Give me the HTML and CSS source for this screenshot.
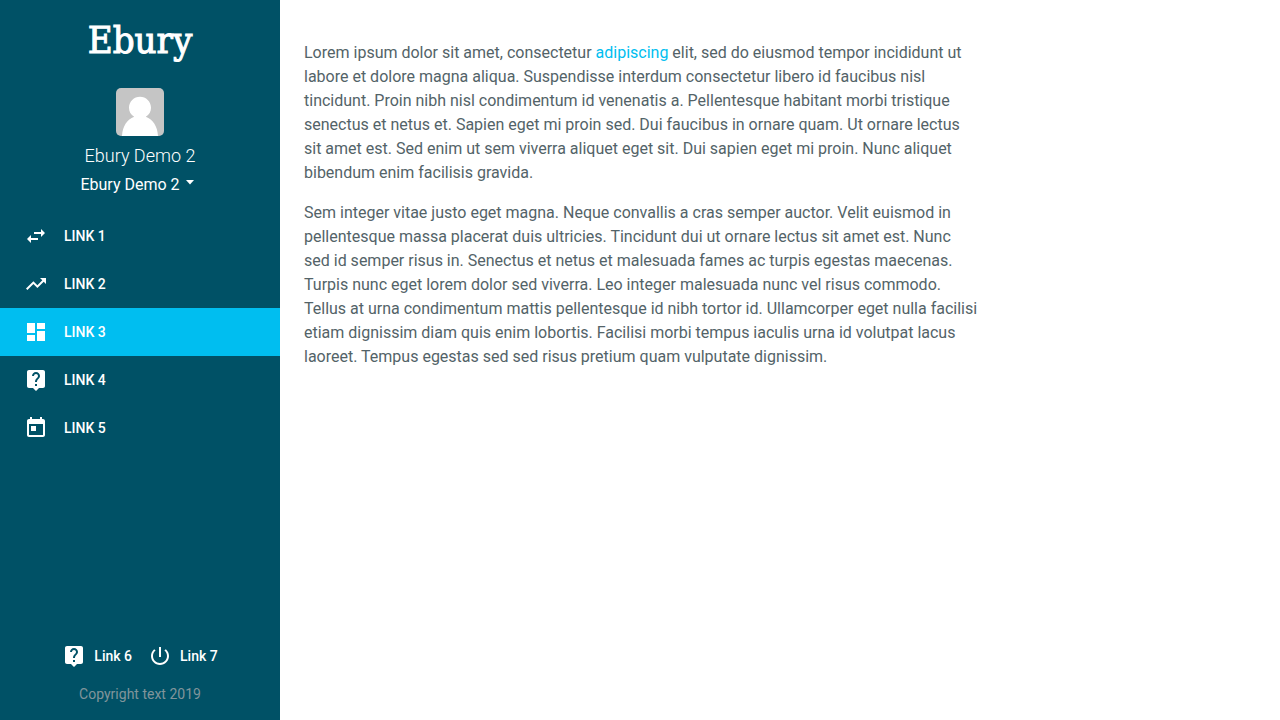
FILE: index.html
```html
<!DOCTYPE html>
<html lang="en">
<head>
<meta charset="utf-8">
<meta name="viewport" content="width=device-width, initial-scale=1">
<title>Ebury</title>
<link rel="stylesheet" href="styles.css">
</head>
<body>
<div class="app">
  <aside class="sidebar">
    <a class="logo" href="#">Ebury</a>
    <div class="profile">
      <svg class="avatar" viewBox="0 0 48 48" role="img" aria-label="User avatar">
        <rect width="48" height="48" fill="#c5c5c5"/>
        <path fill="#fff" d="M6 48C6.500 38.500 11 31.500 18.200 28.800C14.800 26.800 13 23.600 13 19.800C13 13.600 18 8.800 24 8.800S35 13.600 35 19.800C35 23.600 33.200 26.800 29.800 28.800C37 31.500 41.500 38.500 42 48Z"/>
      </svg>
      <div class="name">Ebury Demo 2</div>
      <button class="account" type="button">Ebury Demo 2
        <svg class="caret" viewBox="0 0 8 5" aria-hidden="true"><path d="M0 0h8L4 4.500z"/></svg>
      </button>
    </div>
    <nav class="menu">
      <a class="item" href="#"><svg class="icon" viewBox="0 0 24 24" aria-hidden="true"><path d="M6.990 11L3 15l3.990 4v-3H14v-2H6.990v-3zM21 9l-3.990-4v3H10v2h7.010v3L21 9z"/></svg>Link 1</a>
      <a class="item" href="#"><svg class="icon" viewBox="0 0 24 24" aria-hidden="true"><path d="M16 6l2.290 2.290-4.880 4.880-4-4L2 16.590 3.410 18l6-6 4 4 6.300-6.290L22 12V6z"/></svg>Link 2</a>
      <a class="item active" href="#" aria-current="page"><svg class="icon" viewBox="0 0 24 24" aria-hidden="true"><path d="M3 13h8V3H3v10zm0 8h8v-6H3v6zm10 0h8V11h-8v10zm0-18v6h8V3h-8z"/></svg>Link 3</a>
      <a class="item" href="#"><svg class="icon" viewBox="0 0 24 24" aria-hidden="true"><path d="M19 2H5c-1.110 0-2 .9-2 2v14c0 1.100.89 2 2 2h4l3 3 3-3h4c1.100 0 2-.9 2-2V4c0-1.100-.9-2-2-2zm-6 16h-2v-2h2v2zm2.070-7.750l-.9.920C13.450 11.900 13 12.500 13 14h-2v-.5c0-1.100.45-2.100 1.170-2.830l1.240-1.260c.37-.36.59-.86.59-1.410 0-1.100-.9-2-2-2s-2 .9-2 2H8c0-2.210 1.790-4 4-4s4 1.790 4 4c0 .88-.36 1.680-.93 2.250z"/></svg>Link 4</a>
      <a class="item" href="#"><svg class="icon" viewBox="0 0 24 24" aria-hidden="true"><path d="M19 3h-1V1h-2v2H8V1H6v2H5c-1.110 0-1.990.9-1.990 2L3 19c0 1.100.89 2 2 2h14c1.100 0 2-.9 2-2V5c0-1.100-.9-2-2-2zm0 16H5V8h14v11zM7 10h5v5H7z"/></svg>Link 5</a>
    </nav>
    <footer class="footer">
      <div class="actions">
        <a class="action" href="#"><svg class="icon" viewBox="0 0 24 24" aria-hidden="true"><path d="M19 2H5c-1.110 0-2 .9-2 2v14c0 1.100.89 2 2 2h4l3 3 3-3h4c1.100 0 2-.9 2-2V4c0-1.100-.9-2-2-2zm-6 16h-2v-2h2v2zm2.070-7.750l-.9.920C13.450 11.900 13 12.500 13 14h-2v-.5c0-1.100.45-2.100 1.170-2.830l1.240-1.260c.37-.36.59-.86.59-1.410 0-1.100-.9-2-2-2s-2 .9-2 2H8c0-2.210 1.790-4 4-4s4 1.790 4 4c0 .88-.36 1.680-.93 2.250z"/></svg>Link 6</a>
        <a class="action" href="#"><svg class="icon" viewBox="0 0 24 24" aria-hidden="true"><path d="M13 3h-2v10h2V3zm4.830 2.170l-1.420 1.420C17.990 7.860 19 9.810 19 12c0 3.870-3.130 7-7 7s-7-3.130-7-7c0-2.190 1.010-4.140 2.580-5.420L6.170 5.170C4.230 6.820 3 9.260 3 12c0 4.970 4.030 9 9 9s9-4.030 9-9c0-2.740-1.230-5.180-3.170-6.830z"/></svg>Link 7</a>
      </div>
      <div class="copyright">Copyright text 2019</div>
    </footer>
  </aside>
  <main class="content">
    <p>Lorem ipsum dolor sit amet, consectetur <a href="#">adipiscing</a> elit, sed do eiusmod tempor incididunt ut labore et dolore magna aliqua. Suspendisse interdum consectetur libero id faucibus nisl tincidunt. Proin nibh nisl condimentum id venenatis a. Pellentesque habitant morbi tristique senectus et netus et. Sapien eget mi proin sed. Dui faucibus in ornare quam. Ut ornare lectus sit amet est. Sed enim ut sem viverra aliquet eget sit. Dui sapien eget mi proin. Nunc aliquet bibendum enim facilisis gravida.</p>
    <p>Sem integer vitae justo eget magna. Neque convallis a cras semper auctor. Velit euismod in pellentesque massa placerat duis ultricies. Tincidunt dui ut ornare lectus sit amet est. Nunc sed id semper risus in. Senectus et netus et malesuada fames ac turpis egestas maecenas. Turpis nunc eget lorem dolor sed viverra. Leo integer malesuada nunc vel risus commodo. Tellus at urna condimentum mattis pellentesque id nibh tortor id. Ullamcorper eget nulla facilisi etiam dignissim diam quis enim lobortis. Facilisi morbi tempus iaculis urna id volutpat lacus laoreet. Tempus egestas sed sed risus pretium quam vulputate dignissim.</p>
  </main>
</div>
</body>
</html>
```
FILE: styles.css
```css
* { box-sizing: border-box; }
body {
  margin: 0;
  font-family: Roboto, "Liberation Sans", sans-serif;
  font-size: 16px;
  line-height: 24px;
  color: #536368;
  background: #fff;
}
a { color: #00bef0; text-decoration: none; }
.app { display: flex; min-height: 100vh; }
.sidebar {
  flex: 0 0 280px;
  display: flex;
  flex-direction: column;
  padding: 16px 0;
  color: #fff;
  background: #005166;
}
.logo {
  align-self: center;
  font-family: "DejaVu Serif Condensed", "DejaVu Serif", serif;
  font-size: 38px;
  line-height: 48px;
  color: #fff;
  -webkit-text-stroke: 1px #fff;
}
.profile {
  display: flex;
  flex-direction: column;
  align-items: center;
  padding: 24px 0 15px;
}
.avatar { width: 48px; height: 48px; border-radius: 5px; overflow: hidden; }
.name {
  margin-top: 8px;
  font-size: 18px;
  font-weight: 300;
}
.account {
  display: flex;
  gap: 6px;
  margin-top: 5px;
  padding: 0 6px 0 0;
  border: 0;
  font: inherit;
  color: inherit;
  background: none;
  cursor: pointer;
}
.caret { width: 8px; height: 5px; margin-top: 7px; fill: currentColor; }
.icon { flex: none; width: 24px; height: 24px; fill: currentColor; }
.item {
  display: flex;
  align-items: center;
  gap: 16px;
  height: 48px;
  padding: 0 24px;
  font-size: 14px;
  font-weight: 500;
  text-transform: uppercase;
  color: #fff;
}
.active { background: #00bef0; }
.footer { margin-top: auto; text-align: center; }
.actions { display: flex; justify-content: center; gap: 16px; }
.action {
  display: flex;
  align-items: center;
  gap: 8px;
  font-size: 14px;
  font-weight: 500;
  color: #fff;
}
.copyright {
  margin-top: 16px;
  font-size: 14px;
  line-height: 20px;
  color: #80959b;
}
.content { flex: 1; min-width: 0; padding: 41px 24px; }
.content p { max-width: 675px; margin: 0 0 16px; }
```
